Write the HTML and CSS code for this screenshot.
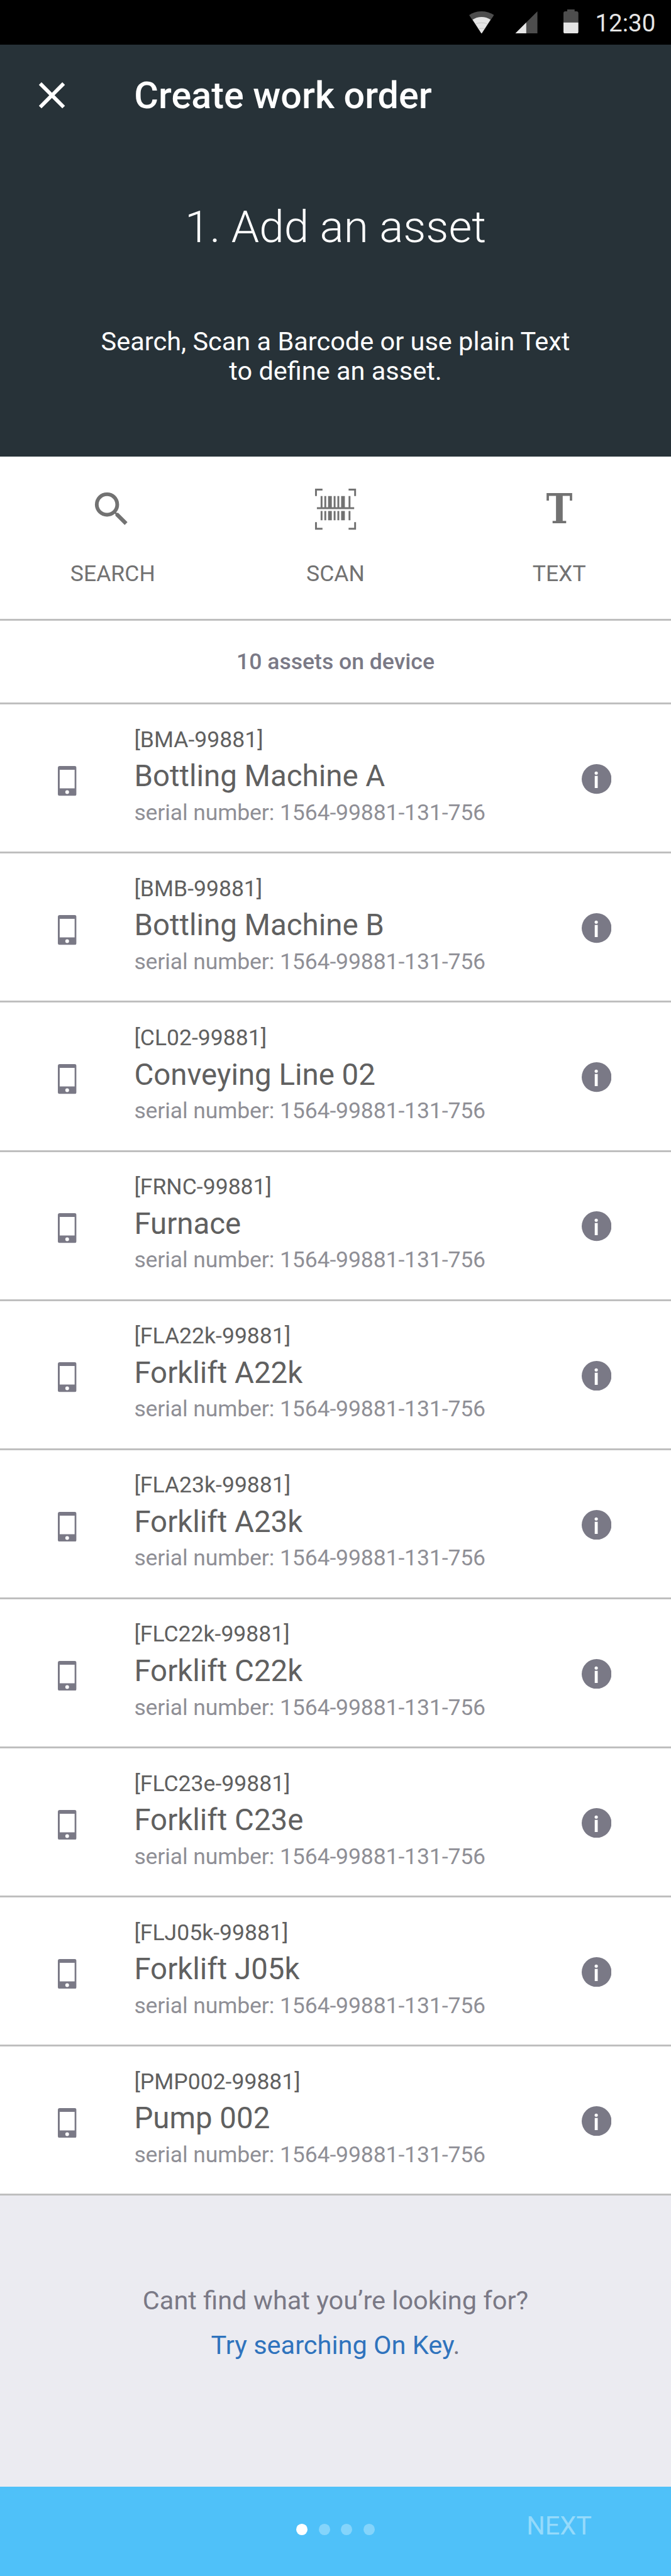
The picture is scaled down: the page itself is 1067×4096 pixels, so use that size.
FILE: index.html
```html
<!DOCTYPE html>
<html lang="en">
<head>
<meta charset="utf-8">
<title>Create work order</title>
<link rel="stylesheet" href="styles.css">
</head>
<body>
<svg class="sprite" aria-hidden="true">
  <symbol id="phone" viewBox="0 0 30 48">
    <path fill-rule="evenodd" d="M3 0h24a3 3 0 0 1 3 3v42a3 3 0 0 1-3 3H3a3 3 0 0 1-3-3V3a3 3 0 0 1 3-3zM3 6v30h24V6zM15 39a3 3 0 1 0 0 6a3 3 0 1 0 0-6z"/>
  </symbol>
  <symbol id="info" viewBox="0 0 48 48">
    <circle cx="24" cy="24" r="24"/>
    <circle cx="23.4" cy="14.4" r="2.6" fill="#fff"/>
    <path d="M21 19h4.8v19.4H21z" fill="#fff"/>
  </symbol>
</svg>

<header class="header">
  <div class="status">
    <svg class="status-wifi" viewBox="0 0 40 36">
      <path class="dim" d="M0 6Q9 0 20 0T40 6L20 36z"/>
      <path class="lit" d="M5.5 13.5Q12 9 20 9T34.5 13.5L20 36z"/>
      <path class="arc" d="M11 20.5Q12.500 18.500 20 18.500T29 20.500M14.500 28Q16 27.500 20 27.500T25.500 28"/>
    </svg>
    <svg class="status-signal" viewBox="0 0 36 36">
      <path class="dim" d="M36 0v36H0z"/>
      <path class="lit" d="M18 18v18H0z"/>
    </svg>
    <svg class="status-battery" viewBox="0 0 24 39">
      <path class="dim" d="M6 0h12v3h3a3 3 0 0 1 3 3v15H0V6a3 3 0 0 1 3-3h3z"/>
      <path class="lit" d="M0 21h24v15a3 3 0 0 1-3 3H3a3 3 0 0 1-3-3z"/>
    </svg>
    <span class="status-time">12:30</span>
  </div>
  <div class="appbar">
    <svg class="close" viewBox="0 0 24 24"><path d="M19 6.410L17.590 5 12 10.590 6.410 5 5 6.410 10.590 12 5 17.590 6.410 19 12 13.410 17.590 19 19 17.590 13.410 12z"/></svg>
    <span class="title">Create work order</span>
  </div>
  <h1 class="step">1. Add an asset</h1>
  <p class="lead">Search, Scan a Barcode or use plain Text<br>to define an asset.</p>
</header>

<nav class="tools">
  <div class="tool">
    <svg class="tool-icon" viewBox="0 0 24 24"><path d="M15.500 14h-.79l-.28-.27A6.471 6.471 0 0 0 16 9.500 6.500 6.500 0 1 0 9.500 16c1.610 0 3.090-.59 4.230-1.570l.27.28v.79l5 4.990L20.490 19l-4.990-5zm-6 0C7.010 14 5 11.990 5 9.500S7.010 5 9.500 5 14 7.010 14 9.500 11.990 14 9.500 14z"/></svg>
    <span class="tool-label search-label">SEARCH</span>
  </div>
  <div class="tool">
    <svg class="tool-icon" viewBox="0 0 72 72"><path d="M3 3h12v3H6v9H3zM57 3h12v12h-3V6h-9zM3 57h3v9h9v3H3zM66 57h3v12H57v-3h9zM6 33h60v3H6zM12 15h3v18h-3zM18 15h3v18h-3zM24 15h6v18h-6zM33 15h3v18h-3zM39 15h3v18h-3zM45 15h6v18h-6zM57 15h3v18h-3zM12 39h3v15h-3zM18 39h3v15h-3zM24 39h6v15h-6zM33 39h3v15h-3zM39 39h3v15h-3zM45 39h6v15h-6zM57 39h3v15h-3z"/></svg>
    <span class="tool-label">SCAN</span>
  </div>
  <div class="tool">
    <span class="tool-icon letter">T</span>
    <span class="tool-label">TEXT</span>
  </div>
</nav>

<p class="count">10 assets on device</p>

<ul class="assets">
  <li class="asset"><svg class="phone"><use href="#phone"/></svg><div class="text"><span class="code">[BMA-99881]</span><span class="name">Bottling Machine A</span><span class="serial">serial number: 1564-99881-131-756</span></div><svg class="info"><use href="#info"/></svg></li>
  <li class="asset"><svg class="phone"><use href="#phone"/></svg><div class="text"><span class="code">[BMB-99881]</span><span class="name">Bottling Machine B</span><span class="serial">serial number: 1564-99881-131-756</span></div><svg class="info"><use href="#info"/></svg></li>
  <li class="asset"><svg class="phone"><use href="#phone"/></svg><div class="text"><span class="code">[CL02-99881]</span><span class="name">Conveying Line 02</span><span class="serial">serial number: 1564-99881-131-756</span></div><svg class="info"><use href="#info"/></svg></li>
  <li class="asset"><svg class="phone"><use href="#phone"/></svg><div class="text"><span class="code">[FRNC-99881]</span><span class="name">Furnace</span><span class="serial">serial number: 1564-99881-131-756</span></div><svg class="info"><use href="#info"/></svg></li>
  <li class="asset"><svg class="phone"><use href="#phone"/></svg><div class="text"><span class="code">[FLA22k-99881]</span><span class="name">Forklift A22k</span><span class="serial">serial number: 1564-99881-131-756</span></div><svg class="info"><use href="#info"/></svg></li>
  <li class="asset"><svg class="phone"><use href="#phone"/></svg><div class="text"><span class="code">[FLA23k-99881]</span><span class="name">Forklift A23k</span><span class="serial">serial number: 1564-99881-131-756</span></div><svg class="info"><use href="#info"/></svg></li>
  <li class="asset"><svg class="phone"><use href="#phone"/></svg><div class="text"><span class="code">[FLC22k-99881]</span><span class="name">Forklift C22k</span><span class="serial">serial number: 1564-99881-131-756</span></div><svg class="info"><use href="#info"/></svg></li>
  <li class="asset"><svg class="phone"><use href="#phone"/></svg><div class="text"><span class="code">[FLC23e-99881]</span><span class="name">Forklift C23e</span><span class="serial">serial number: 1564-99881-131-756</span></div><svg class="info"><use href="#info"/></svg></li>
  <li class="asset"><svg class="phone"><use href="#phone"/></svg><div class="text"><span class="code">[FLJ05k-99881]</span><span class="name">Forklift J05k</span><span class="serial">serial number: 1564-99881-131-756</span></div><svg class="info"><use href="#info"/></svg></li>
  <li class="asset"><svg class="phone"><use href="#phone"/></svg><div class="text"><span class="code">[PMP002-99881]</span><span class="name">Pump 002</span><span class="serial">serial number: 1564-99881-131-756</span></div><svg class="info"><use href="#info"/></svg></li>
</ul>

<section class="help">
  <p>Cant find what you’re looking for?</p>
  <p><a class="link">Try searching On Key</a>.</p>
</section>

<footer class="footer">
  <div class="dots"><i class="dot active"></i><i class="dot"></i><i class="dot"></i><i class="dot"></i></div>
  <span class="next">NEXT</span>
</footer>
</body>
</html>
```
FILE: styles.css
```css
/* 1rem = 10 design pixels of the 1080-wide layout */
html { font-size: 9.8794px; }
* { box-sizing: border-box; margin: 0; padding: 0; }
body {
  font-family: Roboto, sans-serif;
  font-size: 3.6rem;
  background: #fff;
  overflow: hidden;
}
svg { display: block; flex: none; }
.sprite { display: none; }

.header { height: 73.5rem; background: #273238; color: #fff; }
.status {
  height: 7.2rem;
  background: #000;
  display: flex;
  justify-content: flex-end;
  align-items: flex-end;
  padding: 0 2.5rem 1.8rem 0;
}
.status-wifi { width: 4rem; height: 3.6rem; margin-right: 3.4rem; }
.status-signal { width: 3.6rem; height: 3.6rem; margin-right: 4.2rem; }
.status-battery { width: 2.4rem; height: 3.9rem; margin-right: 2.7rem; }
.status-time { font-size: 3.9rem; line-height: 3.9rem; margin-bottom: -.33rem; color: #e5e5e5; }
.dim { fill: #4d4d4d; }
.lit { fill: #e5e5e5; }
.arc { fill: none; stroke: #bbb; stroke-width: .8; }

.appbar { height: 16.2rem; display: flex; align-items: center; padding-left: 4.8rem; }
.close { width: 7.2rem; height: 7.2rem; margin-right: 9.6rem; fill: #fff; }
.title { font-size: 6rem; font-weight: 500; }
.step {
  margin-top: 8.67rem;
  font-size: 7.2rem;
  line-height: 9rem;
  font-weight: 300;
  text-align: center;
}
.lead { margin-top: 11.56rem; font-size: 4.2rem; line-height: 4.8rem; text-align: center; }

.tools {
  height: 26.4rem;
  display: grid;
  grid-template-columns: repeat(3, 1fr);
  border-bottom: 3px solid #bfbfbf;
  color: #727272;
  fill: #727272;
}
.tool { display: flex; flex-direction: column; align-items: center; padding-top: 4.8rem; }
.tool-icon { width: 7.2rem; height: 7.2rem; }
.letter {
  font: bold 6.6rem/7.2rem "DejaVu Serif Condensed", "DejaVu Serif", serif;
  font-stretch: condensed;
  text-align: center;
  transform: scaleX(.96);
}
.tool-label { margin-top: 4.44rem; line-height: 4.8rem; }
.search-label { padding-left: .3rem; }

.count {
  height: 13.5rem;
  line-height: 13.2rem;
  font-weight: 500;
  text-align: center;
  color: #7a7986;
  border-bottom: 3px solid #bfbfbf;
}

.assets { list-style: none; }
.asset {
  height: 24rem;
  display: flex;
  border-bottom: 3px solid #bfbfbf;
  padding: 3.3rem 9.6rem 0 9.3rem;
  fill: #7a7986;
}
.phone { width: 3rem; height: 4.8rem; margin-top: 6.6rem; }
.info { width: 4.8rem; height: 4.8rem; margin-top: 6.3rem; }
.text { flex: 1; display: flex; flex-direction: column; padding-left: 9.3rem; }
.code { line-height: 4.8rem; color: #606060; }
.name { font-size: 4.8rem; line-height: 7.05rem; color: #606060; }
.serial { line-height: 4.5rem; color: #8f8f96; letter-spacing: -.012rem; }

.help {
  height: 46.8rem;
  padding-top: 13.3rem;
  background: #ebebf1;
  color: #7a7986;
  font-size: 4.2rem;
  line-height: 7.2rem;
  text-align: center;
}
.link { color: #2f73bd; }

.footer {
  height: 14.4rem;
  background: #4fc1f9;
  display: grid;
  grid-template-columns: repeat(3, 1fr);
  align-items: center;
  justify-items: center;
}
.dots { grid-column: 2; display: flex; gap: 1.8rem; padding-bottom: .6rem; }
.dot { width: 1.8rem; height: 1.8rem; border-radius: 50%; background: #84d4fb; }
.dot.active { background: #fff; }
.next { font-size: 4.2rem; line-height: 4.8rem; padding-bottom: 1.68rem; color: #95dafb; }
```
